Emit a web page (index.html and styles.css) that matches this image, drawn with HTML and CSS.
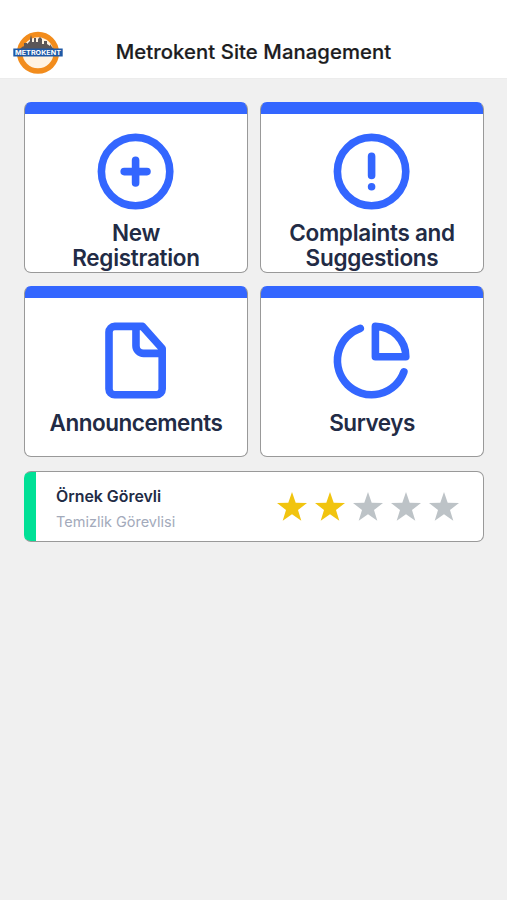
FILE: index.html
```html
<!DOCTYPE html>
<html lang="en">
<head>
<meta charset="utf-8">
<meta name="viewport" content="width=device-width, initial-scale=1">
<title>Metrokent Site Management</title>
<link rel="stylesheet" href="styles.css">
</head>
<body>
<header class="header">
  <svg class="logo" viewBox="0 0 50 44" role="img" aria-label="Metrokent">
    <circle cx="25" cy="22.800" r="18.300" fill="#fff3e2" stroke="#f28c1c" stroke-width="5.500"/>
    <path d="M6 20l3-3 2-1v-3h3v1l3-3V9l1-4 1 4v3h2V8h2v4h2V9l2-2 2 2v5h2v-3h3v3l3 2v-2l2 3 3 3z" fill="#5b5658"/>
    <rect x=".3" y="18.500" width="49.400" height="8" fill="#1f59a6"/>
    <text x="25" y="25" text-anchor="middle" textLength="46" lengthAdjust="spacingAndGlyphs" class="logo-text">METROKENT</text>
  </svg>
  <h1 class="title">Metrokent Site Management</h1>
</header>
<main class="content">
  <nav class="grid">
    <a class="card card-tall">
      <svg class="icon" viewBox="0 0 24 24"><circle cx="12" cy="12" r="9"/><path d="M12 9v6M9 12h6"/></svg>
      <span class="label">New<br>Registration</span>
    </a>
    <a class="card card-tall">
      <svg class="icon" viewBox="0 0 24 24"><circle cx="12" cy="12" r="9"/><path d="M12 8v5M12 16v0"/></svg>
      <span class="label">Complaints and<br>Suggestions</span>
    </a>
    <a class="card">
      <svg class="icon" viewBox="0 0 24 24"><path d="M13.800 3H6.500A1.500 1.500 0 0 0 5 4.500v15A1.500 1.500 0 0 0 6.500 21h11a1.500 1.500 0 0 0 1.500-1.500V8.800zM12.100 3v5.100a2 2 0 0 0 2 2H19"/></svg>
      <span class="label label-long">Announcements</span>
    </a>
    <a class="card">
      <svg class="icon" viewBox="0 0 24 24"><path d="M9.030 3.500A9 9 0 1 0 20.500 14.970M13 3v8h8a8 8 0 0 0-8-8z"/></svg>
      <span class="label label-long">Surveys</span>
    </a>
  </nav>
  <section class="staff">
    <div class="person">
      <div class="name">Örnek Görevli</div>
      <div class="role">Temizlik Görevlisi</div>
    </div>
    <div class="stars">
      <svg class="star on" viewBox="0 0 30 29"><path d="M15 0l3.700 10.700L30 10.900l-9 7L24.300 28.700 15 22.300 5.700 28.700 9 17.900 0 10.900l11.300-.2z"/></svg>
      <svg class="star on" viewBox="0 0 30 29"><path d="M15 0l3.700 10.700L30 10.900l-9 7L24.300 28.700 15 22.300 5.700 28.700 9 17.900 0 10.900l11.300-.2z"/></svg>
      <svg class="star" viewBox="0 0 30 29"><path d="M15 0l3.700 10.700L30 10.900l-9 7L24.300 28.700 15 22.300 5.700 28.700 9 17.900 0 10.900l11.300-.2z"/></svg>
      <svg class="star" viewBox="0 0 30 29"><path d="M15 0l3.700 10.700L30 10.900l-9 7L24.300 28.700 15 22.300 5.700 28.700 9 17.900 0 10.900l11.300-.2z"/></svg>
      <svg class="star" viewBox="0 0 30 29"><path d="M15 0l3.700 10.700L30 10.900l-9 7L24.300 28.700 15 22.300 5.700 28.700 9 17.900 0 10.900l11.300-.2z"/></svg>
    </div>
  </section>
</main>
</body>
</html>
```
FILE: styles.css
```css
* { box-sizing: border-box; }
body {
  margin: 0;
  min-height: 900px;
  background: #f0f0f0;
  font-family: Inter, "Liberation Sans", sans-serif;
}
.header {
  display: grid;
  grid-template-columns: 50px 1fr 50px;
  align-items: center;
  height: 79px;
  padding: 25px 13px 0;
  background: #fff;
  border-bottom: 1px solid #ececec;
}
.logo { display: block; width: 50px; height: 44px; }
.logo-text { font-size: 6.500px; font-weight: 700; fill: #fff; }
.title {
  margin: 0;
  text-align: center;
  font-size: 20.300px;
  font-weight: 500;
  line-height: 24px;
  white-space: nowrap;
  letter-spacing: 0.070px;
  color: #1c1c1e;
  -webkit-text-stroke: 0.200px #1c1c1e;
}
.content { padding: 23px 23px 0 24px; }
.grid {
  display: grid;
  grid-template-columns: 1fr 1fr;
  grid-auto-rows: 171px;
  gap: 13px 12px;
}
.card {
  display: flex;
  flex-direction: column;
  align-items: center;
  justify-content: center;
  padding-top: 8px;
  border: 1px solid #999;
  border-top-color: #3366ff;
  border-radius: 7px;
  background: linear-gradient(#3366ff 11.500px, #fff 11.500px);
}
.card-tall { justify-content: flex-start; padding-top: 22.500px; }
.icon {
  flex: none;
  width: 91.200px;
  height: 91.200px;
  fill: none;
  stroke: #3366ff;
  stroke-width: 2;
  stroke-linecap: round;
  stroke-linejoin: round;
}
.label {
  margin-top: 4.800px;
  text-align: center;
  font-size: 22.500px;
  font-weight: 600;
  line-height: 24.500px;
  letter-spacing: -0.280px;
  white-space: nowrap;
  color: #222b45;
}
.label-long { letter-spacing: -0.480px; }
.staff {
  display: flex;
  align-items: center;
  justify-content: space-between;
  height: 71px;
  margin-top: 14px;
  padding: 0 24px 0 31px;
  border: 1px solid #999;
  border-left-color: #00e096;
  border-radius: 7px;
  background: linear-gradient(90deg, #00e096 11.500px, #fff 11.500px);
}
.person { padding-top: 5px; }
.name { font-size: 15.900px; font-weight: 600; line-height: 24px; color: #222b45; }
.role { font-size: 14.500px; line-height: 25px; color: #a3aabb; }
.stars { display: flex; gap: 7.900px; }
.star { width: 30px; height: 29px; fill: #bdc3c7; }
.star.on { fill: #f1c40f; }
```
